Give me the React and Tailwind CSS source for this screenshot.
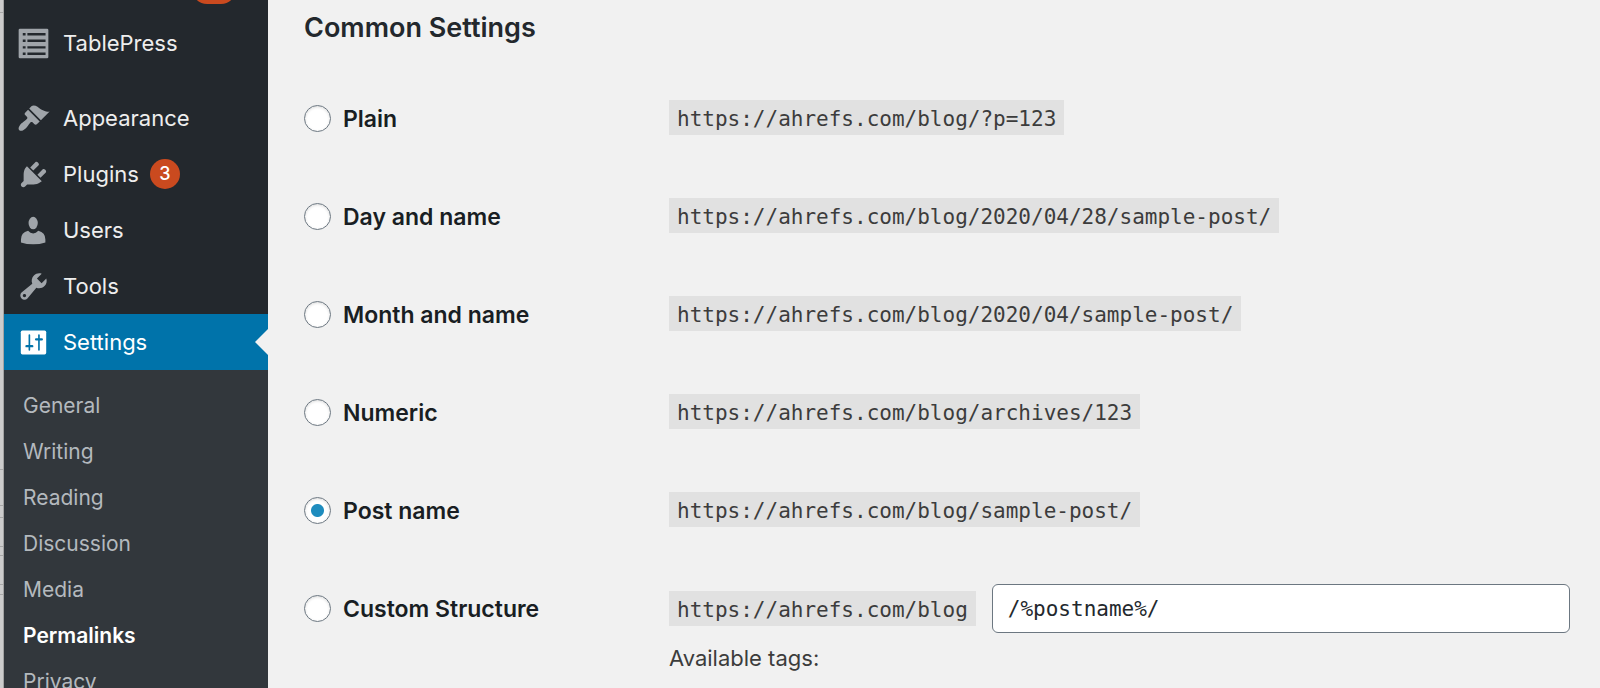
import React, { useState } from "react";

const menuItems = [
  { id: "appearance", label: "Appearance" },
  { id: "plugins", label: "Plugins", count: 3 },
  { id: "users", label: "Users" },
  { id: "tools", label: "Tools" },
  { id: "settings", label: "Settings" },
];

const submenuItems = [
  "General",
  "Writing",
  "Reading",
  "Discussion",
  "Media",
  "Permalinks",
  "Privacy",
];

const structures = [
  { id: "plain", label: "Plain", url: "https://ahrefs.com/blog/?p=123" },
  {
    id: "day",
    label: "Day and name",
    url: "https://ahrefs.com/blog/2020/04/28/sample-post/",
  },
  {
    id: "month",
    label: "Month and name",
    url: "https://ahrefs.com/blog/2020/04/sample-post/",
  },
  {
    id: "numeric",
    label: "Numeric",
    url: "https://ahrefs.com/blog/archives/123",
  },
  {
    id: "postname",
    label: "Post name",
    url: "https://ahrefs.com/blog/sample-post/",
  },
  {
    id: "custom",
    label: "Custom Structure",
    url: "https://ahrefs.com/blog",
  },
];

// Row heights of the window peeking out behind the sidebar
const edgeRows = [
  "h-[13px]",
  "h-[457px]",
  "h-9",
  "h-3",
  "h-[29px]",
  "h-[9px]",
  "h-[29px]",
  "h-[10px]",
];

// Admin menu icons, all drawn on a 20x20 grid
const MenuIcon = ({ id }) => (
  <svg viewBox="0 0 20 20" className="h-[33px] w-[33px]" fill="currentColor">
    {id === "tablepress" && (
      <path
        fillRule="evenodd"
        d="M1.800 1h16.400q.8 0 .8.800v16.400q0 .8-.8.800H1.800q-.8 0-.8-.800V1.800q0-.8.800-.8zM3.500 3.600v1.500h1.700V3.600zM6.300 3.600v1.500h11V3.600zM3.500 7.600v1.500h1.700V7.600zM6.300 7.600v1.500h11V7.600zM3.500 11.600v1.500h1.700v-1.500zM6.300 11.600v1.500h11v-1.500zM3.500 15.500V17h1.700v-1.500zM6.300 15.500V17h11v-1.500z"
      />
    )}
    {id === "appearance" && (
      <path d="M14.480 11.060L7.410 3.990l1.500-1.500c.5-.56 2.300-.47 3.510.320 1.210.800 1.430 1.280 2.910 2.100 1.180.640 2.450 1.260 4.450.850zm-.710.710L6.700 4.700 4.930 6.470c-.390.390-.390 1.020 0 1.410l1.060 1.060c.390.390.390 1.030 0 1.420-.600.600-1.430 1.110-2.210 1.690-.350.260-.700.530-1.010.840C1.430 14.230.400 16.080 1.400 17.070c.990 1 2.840-.030 4.180-1.360.310-.310.580-.660.850-1.020.570-.780 1.080-1.610 1.690-2.210.390-.390 1.020-.390 1.410 0l1.060 1.060c.390.390 1.020.390 1.410 0z" />
    )}
    {id === "plugins" && (
      <path d="M13.110 4.360L9.870 7.600 8 5.730l3.240-3.240c.350-.340 1.050-.200 1.560.320.520.510.660 1.210.310 1.550zm-8 1.770l.910-1.120 9.010 9.010-1.190.840c-.710.710-2.630 1.160-3.820 1.160H6.140L4.900 17.260c-.590.590-1.540.590-2.120 0-.590-.580-.590-1.530 0-2.120l1.240-1.240v-3.880c0-1.130.400-3.190 1.090-3.890zm7.260 3.970l3.240-3.240c.340-.350 1.040-.210 1.550.310.520.510.660 1.210.310 1.550l-3.240 3.250z" />
    )}
    {id === "users" && (
      <>
        <ellipse cx="9.800" cy="5.500" rx="2.800" ry="3.800" />
        <path d="M6.700 10.200Q8.100 11.800 9.800 11.800T12.900 10.200Q17.200 11.200 17.200 15.500V17.200Q13.800 18.400 9.800 18.400T2.400 17.200V15.500Q2.400 11.200 6.700 10.200Z" />
      </>
    )}
    {id === "tools" && (
      <path d="M16.680 9.770c-1.340 1.340-3.300 1.670-4.950.990l-5.410 6.520c-.990.990-2.590.990-3.580 0s-.990-2.590 0-3.570l6.520-5.420c-.680-1.650-.350-3.610.990-4.950 1.280-1.280 3.120-1.620 4.720-1.060l-2.890 2.890 2.820 2.820 2.860-2.870c.530 1.580.180 3.390-1.080 4.650zM3.810 16.210c.400.390 1.040.390 1.430 0 .400-.400.400-1.040 0-1.430-.390-.400-1.030-.400-1.430 0-.390.390-.390 1.030 0 1.430z" />
    )}
    {id === "settings" && (
      <>
        <rect x="2.300" y="2.800" width="15.400" height="14.400" rx="1" />
        <g stroke="#0073aa" strokeLinecap="round" fill="none">
          <path strokeWidth="1" d="M7.500 5.500V14.500M13.300 5.500V14.500" />
          <path strokeWidth="1.500" d="M5.800 12.200H9.200M11.600 8.100H15" />
        </g>
      </>
    )}
  </svg>
);

const MenuLink = ({ item, active }) => (
  <a
    href={`#${item.id}`}
    className={`relative flex h-14 shrink-0 items-center gap-[11px] pl-[13px] text-[22px] ${
      active ? "bg-[#0073aa] text-white" : "text-[#eeeeee]"
    }`}
  >
    <span className={`pr-[2px] ${active ? "text-white" : "text-[#a0a5aa]"}`}>
      <MenuIcon id={item.id} />
    </span>
    {item.label}
    {item.count && (
      <span className="flex h-[30px] w-[30px] items-center justify-center rounded-full bg-[#ca4a1f] text-lg font-medium text-white">
        {item.count}
      </span>
    )}
    {active && (
      <span className="absolute right-0 top-1/2 -translate-y-1/2 border-y-[13px] border-r-[13px] border-y-transparent border-r-[#f1f1f1]" />
    )}
  </a>
);

const Sidebar = () => (
  <nav className="flex w-[264px] shrink-0 flex-col bg-[#23282d]">
    <div className="flex h-[15px] shrink-0 items-start justify-end pr-8">
      <span className="-mt-[26px] h-[30px] w-11 rounded-full bg-[#ca4a1f]" />
    </div>
    <MenuLink item={{ id: "tablepress", label: "TablePress" }} />
    <div className="mt-[19px] shrink-0">
      {menuItems.map((item) => (
        <MenuLink
          key={item.id}
          item={item}
          active={item.id === "settings"}
        />
      ))}
    </div>
    <ul className="flex-1 bg-[#32373c] pt-[13px]">
      {submenuItems.map((label) => (
        <li key={label}>
          <a
            href={`#${label.toLowerCase()}`}
            className={`block py-2 pl-[19px] text-[21px] leading-[30px] ${
              label === "Permalinks"
                ? "font-semibold text-white"
                : "text-[#b4b9be]"
            }`}
          >
            {label}
          </a>
        </li>
      ))}
    </ul>
  </nav>
);

const App = () => {
  const [selected, setSelected] = useState("postname");
  const [custom, setCustom] = useState("/%postname%/");

  return (
    <div className="flex h-screen overflow-hidden bg-[#f1f1f1] font-['Inter',sans-serif] text-[#23282d]">
      {/* Edge of the window behind */}
      <div className="w-1 shrink-0 border-r border-[#a3a3a3] bg-[#cccccc]">
        {edgeRows.map((height, index) => (
          <div key={index} className={`border-b border-[#a8a8a8] ${height}`} />
        ))}
      </div>
      <Sidebar />

      <main className="min-w-0 flex-1 pl-9 pr-[30px]">
        <h2 className="pt-3 text-[27px] font-semibold leading-8">
          Common Settings
        </h2>
        <table className="mt-[25px] w-full">
          <tbody>
            {structures.map(({ id, label, url }) => (
              <tr key={id} className="align-top">
                <th className="w-[365px] py-[31px] text-left font-semibold">
                  <label className="flex h-9 items-center gap-3 text-[23px] text-[#191e23]">
                    <input
                      type="radio"
                      name="structure"
                      checked={selected === id}
                      onChange={() => setSelected(id)}
                      className="h-[27px] w-[27px] appearance-none rounded-full border border-[#6c7781] bg-white shadow-[inset_0_1px_3px_rgba(0,0,0,0.15)] checked:bg-[radial-gradient(circle,#1e8cbe_6px,#ffffff_7px)]"
                    />
                    <span className="pt-[2px]">{label}</span>
                  </label>
                </th>
                <td className={id === "custom" ? "pt-[25px]" : "py-[31px]"}>
                  <div className="flex items-center gap-4">
                    <code className="bg-[#e1e1e1] px-2 pt-[3px] font-['DejaVu_Sans_Mono',monospace] text-[21px] leading-8 text-[#3c3c3c]">
                      {url}
                    </code>
                    {id === "custom" && (
                      <input
                        type="text"
                        aria-label="Custom structure"
                        value={custom}
                        onChange={(e) => setCustom(e.target.value)}
                        className="h-[49px] min-w-0 flex-1 rounded-md border border-[#6c7781] bg-white px-[15px] font-['DejaVu_Sans_Mono',monospace] text-[21px] text-[#23282d]"
                      />
                    )}
                  </div>
                  {id === "custom" && (
                    <p className="pt-[7px] text-[22px] leading-9 text-[#3c3c3c]">
                      Available tags:
                    </p>
                  )}
                </td>
              </tr>
            ))}
          </tbody>
        </table>
      </main>
    </div>
  );
};

export default App;
